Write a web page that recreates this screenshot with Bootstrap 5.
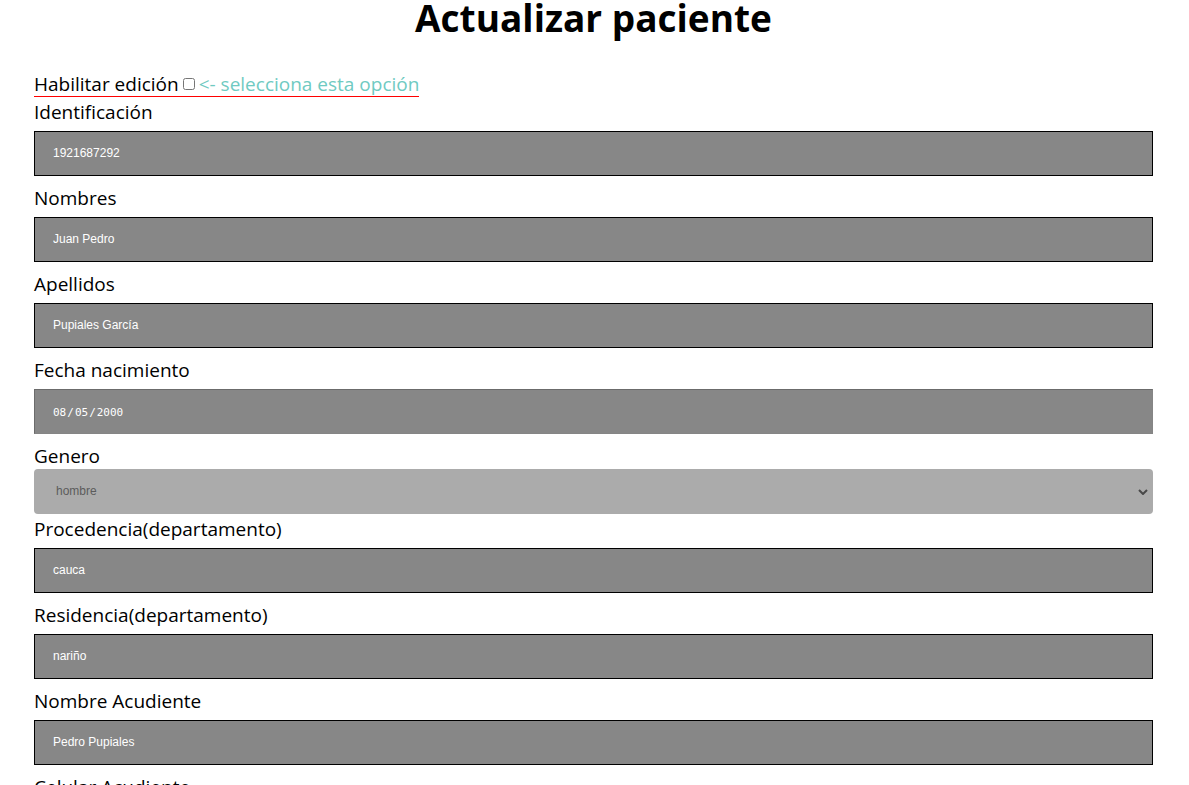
<!DOCTYPE html>
<html lang="es">
<head>
<meta charset="utf-8">
<meta name="viewport" content="width=device-width, initial-scale=1">
<title>Actualizar paciente</title>
<link href="https://cdn.jsdelivr.net/npm/bootstrap@5.3.0/dist/css/bootstrap.min.css" rel="stylesheet">
<style>
  body { font-family: "Open Sans", "Noto Sans", sans-serif; color: #000; background: #fff; }
  .patient-page { padding: 0 36px 24px 34px; }
  .page-title { font-size: 37px; line-height: 48px; margin: -6px 0 30px; font-weight: 700; }
  .edit-toggle { font-size: 19px; line-height: 24px; border-bottom: 1px solid #f00; margin-bottom: 3px; }
  .edit-toggle .hint { color: #6fcac2; }
  .edit-toggle input { width: 12px; height: 12px; margin: 0 4px; }
  .field-label { font-size: 19px; line-height: 25px; margin-bottom: 6px; }
  .field-box, .field-select { height: 45px; font-family: "Liberation Sans", sans-serif; font-size: 12px; }
  .field-box, .field-box:disabled { background: #878787; color: #fff; border: 1px solid #000; border-radius: 0; padding: 0 18px 2px; margin-bottom: 10px; opacity: 1; }
  .field-date, .field-date:disabled { font-family: "DejaVu Sans Mono", monospace; font-size: 11px; padding-top: 4px; padding-bottom: 0; border-color: #6b6b6b #858585 #858585 #6b6b6b; }
  .field-date::-webkit-calendar-picker-indicator { display: none; }
  .field-date::-webkit-datetime-edit-text { padding: 0 1px; }
  .field-select, .field-select:disabled { background-color: #ababab; color: #5c5c5c; border: 0; border-radius: 4px; padding: 0 22px 2px; margin-bottom: 3px; opacity: 1;
    background-image: url("data:image/svg+xml,%3Csvg xmlns='http://www.w3.org/2000/svg' viewBox='0 0 10 6'%3E%3Cpath d='M1 1l4 4 4-4' fill='none' stroke='%23484848' stroke-width='2'/%3E%3C/svg%3E");
    background-size: 10px 6px; background-position: right 5px center; }
</style>
</head>
<body>
<main class="patient-page d-flow-root">
  <h1 class="page-title text-center">Actualizar paciente</h1>
  <form>
    <div class="d-flex">
      <div class="edit-toggle d-inline-flex align-items-center">
        <label for="edicion">Habilitar edición</label>
        <input type="checkbox" id="edicion">
        <label class="hint" for="edicion">&lt;- selecciona esta opción</label>
      </div>
    </div>
    <label class="field-label d-block" for="identificacion">Identificación</label>
    <input class="form-control field-box" type="text" id="identificacion" value="1921687292" disabled>
    <label class="field-label d-block" for="nombres">Nombres</label>
    <input class="form-control field-box" type="text" id="nombres" value="Juan Pedro" disabled>
    <label class="field-label d-block" for="apellidos">Apellidos</label>
    <input class="form-control field-box" type="text" id="apellidos" value="Pupiales García" disabled>
    <label class="field-label d-block" for="nacimiento">Fecha nacimiento</label>
    <input class="form-control field-box field-date" type="date" id="nacimiento" value="2000-08-05" disabled>
    <label class="field-label d-block mb-0" for="genero">Genero</label>
    <select class="form-select field-select" id="genero" disabled>
      <option selected>hombre</option>
      <option>mujer</option>
    </select>
    <label class="field-label d-block" for="procedencia">Procedencia(departamento)</label>
    <input class="form-control field-box" type="text" id="procedencia" value="cauca" disabled>
    <label class="field-label d-block" for="residencia">Residencia(departamento)</label>
    <input class="form-control field-box" type="text" id="residencia" value="nariño" disabled>
    <label class="field-label d-block" for="acudiente">Nombre Acudiente</label>
    <input class="form-control field-box" type="text" id="acudiente" value="Pedro Pupiales" disabled>
    <label class="field-label d-block" for="celular">Celular Acudiente</label>
    <input class="form-control field-box" type="text" id="celular" disabled>
  </form>
</main>
<script src="https://cdn.jsdelivr.net/npm/bootstrap@5.3.0/dist/js/bootstrap.bundle.min.js"></script>
</body>
</html>
